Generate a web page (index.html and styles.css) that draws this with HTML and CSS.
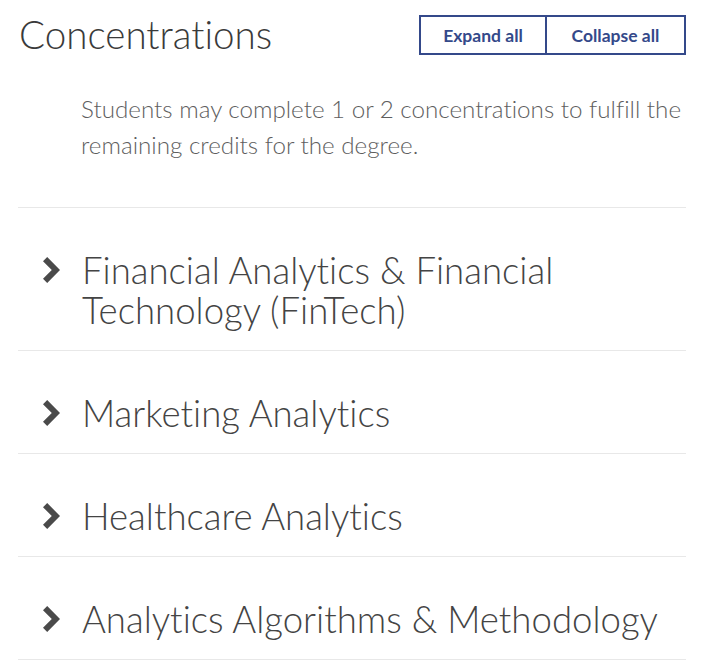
FILE: index.html
```html
<!DOCTYPE html>
<html>
<head>
<meta charset="utf-8">
<link rel="stylesheet" href="styles.css">
</head>
<body>
<div class="page">
  <div class="header">
    <h1 class="title">Concentrations</h1>
    <div class="btns">
      <button class="btn">Expand all</button>
      <button class="btn">Collapse all</button>
    </div>
  </div>
  <p class="intro">Students may complete 1 or 2 concentrations to fulfill the remaining credits for the degree.</p>
  <ul class="list">
    <li class="item"><span class="chev"><svg width="18" height="26" viewBox="0 0 18 26"><polygon points="0,4.2 4.2,0 17,13 4.2,26 0,21.8 8.8,13" fill="#4a4a4a"/></svg></span><span class="label">Financial Analytics &amp; Financial Technology (FinTech)</span></li>
    <li class="item"><span class="chev"><svg width="18" height="26" viewBox="0 0 18 26"><polygon points="0,4.2 4.2,0 17,13 4.2,26 0,21.8 8.8,13" fill="#4a4a4a"/></svg></span><span class="label">Marketing Analytics</span></li>
    <li class="item"><span class="chev"><svg width="18" height="26" viewBox="0 0 18 26"><polygon points="0,4.2 4.2,0 17,13 4.2,26 0,21.8 8.8,13" fill="#4a4a4a"/></svg></span><span class="label">Healthcare Analytics</span></li>
    <li class="item"><span class="chev"><svg width="18" height="26" viewBox="0 0 18 26"><polygon points="0,4.2 4.2,0 17,13 4.2,26 0,21.8 8.8,13" fill="#4a4a4a"/></svg></span><span class="label">Analytics Algorithms &amp; Methodology</span></li>
  </ul>
</div>
</body>
</html>
```
FILE: styles.css
```css
html, body {
  margin: 0;
  padding: 0;
  background: #fff;
}
.page {
  padding: 15px 32px 0 18px;
  font-family: Lato, "Liberation Sans", sans-serif;
  font-variant-ligatures: none;
  color: #444;
}
.header {
  display: flex;
  justify-content: space-between;
  align-items: flex-start;
}
.title {
  margin: -3px 0 0 0;
  font-size: 38.6px;
  font-weight: 300;
  line-height: 44px;
  color: #3a3a3a;
  padding-left: 1px;
}
.btns {
  display: flex;
  border: 2px solid #34498a;
  height: 40px;
  box-sizing: border-box;
}
.btn {
  background: #fff;
  border: none;
  font-family: Lato, "Liberation Sans", sans-serif;
  font-weight: 700;
  font-size: 17.5px;
  color: #34498a;
  padding: 0;
  margin: 0;
  cursor: pointer;
}
.btn:first-child {
  width: 126px;
  border-right: 2px solid #34498a;
}
.btn:last-child {
  width: 137px;
}
.intro {
  margin: 35px 0 0 0;
  padding: 0 0 44px 63px;
  font-size: 24.2px;
  line-height: 36px;
  font-weight: 300;
  color: #5e5e5e;
  border-bottom: 1px solid #e8e8e8;
}
.list {
  list-style: none;
  margin: 0;
  padding: 0;
}
.item {
  display: flex;
  align-items: flex-start;
  padding: 42px 0 20px 0;
  border-bottom: 1px solid #e8e8e8;
}
.chev {
  flex: 0 0 auto;
  width: 64px;
  padding-left: 25px;
  box-sizing: border-box;
  padding-top: 7px;
  display: flex;
}
.label {
  font-size: 36.6px;
  line-height: 40px;
  font-weight: 300;
  color: #444;
}
```
